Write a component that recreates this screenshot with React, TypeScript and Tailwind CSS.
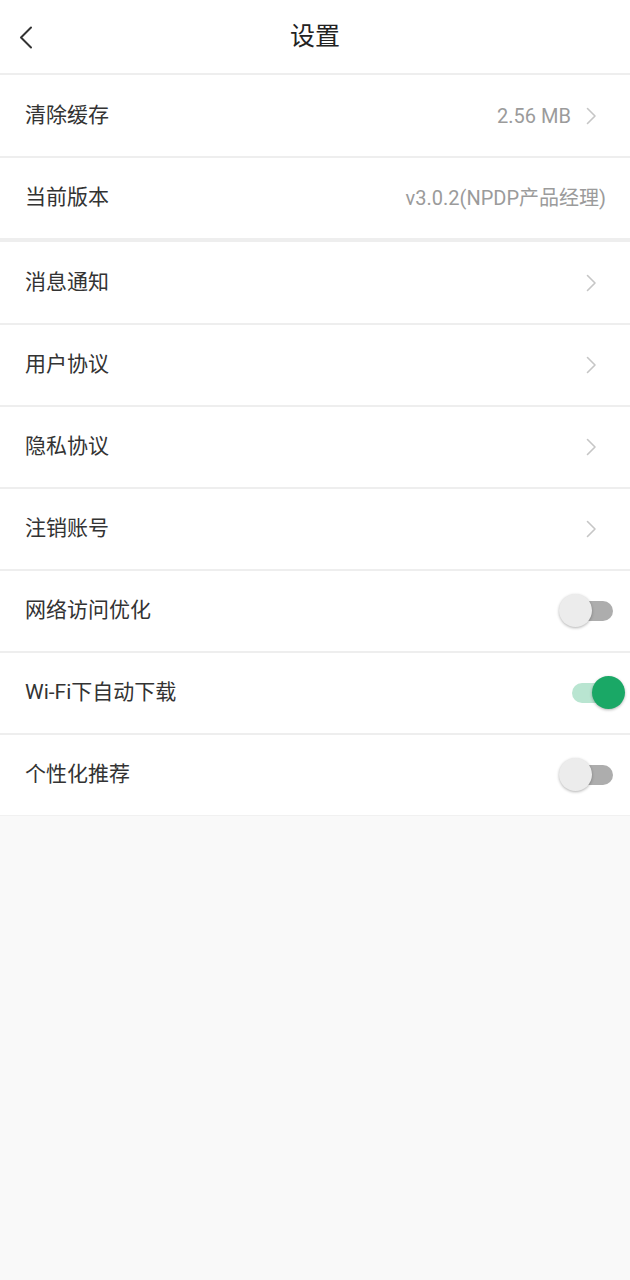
import React from 'react';

type Item =
  | { label: string; kind: 'link'; value?: string }
  | { label: string; kind: 'text'; value: string }
  | { label: string; kind: 'toggle'; on: boolean };

const topItems: Item[] = [
  { label: '清除缓存', kind: 'link', value: '2.56 MB' },
  { label: '当前版本', kind: 'text', value: 'v3.0.2(NPDP产品经理)' },
];

const items: Item[] = [
  { label: '消息通知', kind: 'link' },
  { label: '用户协议', kind: 'link' },
  { label: '隐私协议', kind: 'link' },
  { label: '注销账号', kind: 'link' },
  { label: '网络访问优化', kind: 'toggle', on: false },
  { label: 'Wi-Fi下自动下载', kind: 'toggle', on: true },
  { label: '个性化推荐', kind: 'toggle', on: false },
];

function Chevron() {
  return (
    <svg width="11" height="18" viewBox="0 0 11 18" fill="none" className="mr-[33px]">
      <path d="M1.5 1.5 L9 9 L1.5 16.5" stroke="#c6c6c6" strokeWidth="1.6" strokeLinecap="round" strokeLinejoin="round" />
    </svg>
  );
}

function Toggle({ on }: { on: boolean }) {
  return (
    <div className="relative w-[66px] h-[34px] mr-[5px]">
      <div
        className={`absolute left-[13px] top-[7px] w-[41px] h-[20px] rounded-full ${on ? 'bg-[#b9e5d1]' : 'bg-[#adadad]'}`}
      />
      <div
        className={`absolute top-0 w-[33px] h-[33px] rounded-full shadow-[0_1px_3px_rgba(0,0,0,0.3)] ${on ? 'right-0 bg-[#1aa866]' : 'left-0 bg-[#ececec]'}`}
      />
    </div>
  );
}

function Row({ item, h }: { item: Item; h: string }) {
  return (
    <div className={`flex items-center justify-between bg-white pl-[25px] ${h}`}>
      <span className="text-[21px] text-[#333333]">{item.label}</span>
      {item.kind === 'link' && (
        <div className="flex items-center">
          {item.value && <span className="text-[20px] text-[#9b9b9b] mr-[15px]">{item.value}</span>}
          <Chevron />
        </div>
      )}
      {item.kind === 'text' && <span className="text-[20px] text-[#9b9b9b] mr-[24px]">{item.value}</span>}
      {item.kind === 'toggle' && <Toggle on={item.on} />}
    </div>
  );
}

export default function App() {
  return (
    <div
      className="min-h-[1280px] w-[630px] bg-[#f9f9f9]"
      style={{ fontFamily: 'Roboto, "Noto Sans CJK SC", sans-serif' }}
    >
      {/* Header */}
      <div className="relative flex items-center justify-center h-[73px] bg-white">
        <svg width="14" height="23" viewBox="0 0 14 23" fill="none" className="absolute left-[19px] top-[26px]">
          <path d="M12 1.5 L2 11.5 L12 21.5" stroke="#333333" strokeWidth="2" strokeLinecap="round" strokeLinejoin="round" />
        </svg>
        <span className="text-[25px] text-[#222222]">设置</span>
      </div>
      <div className="h-[2px] bg-[#eeeeee]" />

      <Row item={topItems[0]} h="h-[81px]" />
      <div className="h-[2px] bg-[#eeeeee]" />
      <Row item={topItems[1]} h="h-[80px]" />
      <div className="h-[4px] bg-[#eeeeee]" />

      {items.map((item, i) => (
        <div key={item.label}>
          {i > 0 && <div className="h-[2px] bg-[#eeeeee]" />}
          <Row item={item} h={i === 0 ? 'h-[81px]' : 'h-[80px]'} />
        </div>
      ))}
      <div className="h-[1px] bg-[#f1f1f1]" />
    </div>
  );
}
